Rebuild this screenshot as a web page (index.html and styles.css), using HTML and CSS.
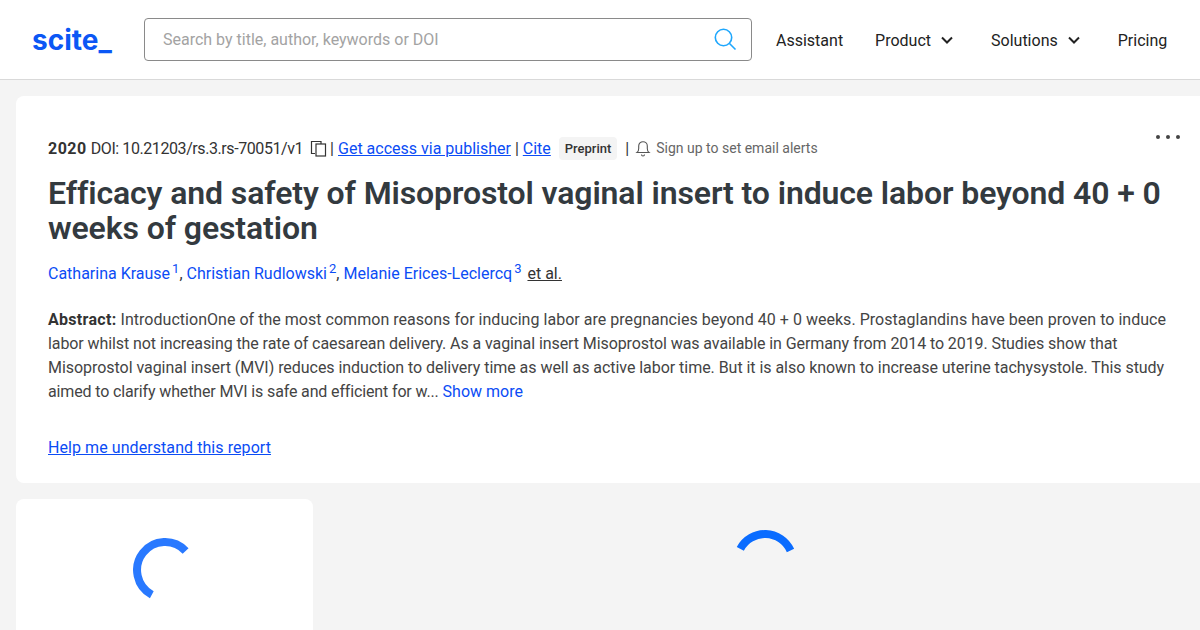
FILE: index.html
```html
<!DOCTYPE html>
<html lang="en">
<head>
<meta charset="utf-8">
<title>Efficacy and safety of Misoprostol vaginal insert</title>
<link rel="stylesheet" href="styles.css">
</head>
<body>
<header class="topbar">
  <a class="logo">scite_</a>
  <div class="search">
    <span class="placeholder">Search by title, author, keywords or DOI</span>
    <svg class="search-icon" width="24" height="24" viewBox="0 0 24 24" fill="none" stroke="#1ea7fd" stroke-width="1.6"><circle cx="10.5" cy="10.5" r="8.2"/><path d="M16.5 16.5L22.5 22.5"/></svg>
  </div>
  <nav class="nav">
    <a class="nav-item assistant">Assistant</a>
    <a class="nav-item product">Product<svg class="chev" width="12" height="8" viewBox="0 0 12 8" fill="none" stroke="#222" stroke-width="2"><path d="M1 1.500L6 6.500L11 1.500"/></svg></a>
    <a class="nav-item solutions">Solutions<svg class="chev" width="12" height="8" viewBox="0 0 12 8" fill="none" stroke="#222" stroke-width="2"><path d="M1 1.500L6 6.500L11 1.500"/></svg></a>
    <a class="nav-item pricing">Pricing</a>
  </nav>
</header>
<main class="page">
  <section class="card">
    <div class="more"><i></i><i></i><i></i></div>
    <div class="meta">
      <b class="year">2020</b><span class="doi">DOI: 10.21203/rs.3.rs-70051/v1</span>
      <svg class="copy" width="17" height="17" viewBox="0 0 17 17" fill="none" stroke="#333" stroke-width="1.2"><path d="M5 13.500H1.500V1.500H11V4"/><rect x="6" y="4" width="9.500" height="12"/></svg>
      <span class="sep sep-copy">|</span><a class="link">Get access via publisher</a><span class="sep">|</span><a class="link">Cite</a>
      <span class="badge">Preprint</span>
      <span class="sep sep-wide">|</span>
      <svg class="bell" width="16" height="18" viewBox="0 0 16 18" fill="none" stroke="#555" stroke-width="1.100"><path d="M2 13.500c1.300-1 1.700-2.200 1.700-4V7a4.300 4.300 0 0 1 8.600 0v2.500c0 1.800.4 3 1.700 4z"/><path d="M6.500 15.500a1.500 1.500 0 0 0 3 0"/></svg>
      <span class="alerts">Sign up to set email alerts</span>
    </div>
    <h1 class="title">Efficacy and safety of Misoprostol vaginal insert to induce labor beyond 40 + 0 weeks of gestation</h1>
    <p class="authors"><a>Catharina Krause</a><sup>1</sup>, <a>Christian Rudlowski</a><sup>2</sup>, <a>Melanie Erices-Leclercq</a><sup>3</sup> <u class="etal">et al.</u></p>
    <p class="abstract"><span class="ln ln1"><b>Abstract:</b> IntroductionOne of the most common reasons for inducing labor are pregnancies beyond 40 + 0 weeks. Prostaglandins have been proven to induce</span> <span class="ln ln2">labor whilst not increasing the rate of caesarean delivery. As a vaginal insert Misoprostol was available in Germany from 2014 to 2019. Studies show that</span> <span class="ln ln3">Misoprostol vaginal insert (MVI) reduces induction to delivery time as well as active labor time. But it is also known to increase uterine tachysystole. This study</span> <span class="ln ln4"><span class="ln4-text">aimed to clarify whether MVI is safe and efficient for w...</span> <a class="show">Show more</a></span></p>
    <a class="link help">Help me understand this report</a>
  </section>
  <div class="lower">
    <aside class="side">
      <svg width="70" height="70" viewBox="0 0 70 70" fill="none" stroke="#2979ff" stroke-width="8"><path d="M52.600 14A28 28 0 1 0 18.800 57.700"/></svg>
    </aside>
    <div class="content">
      <svg width="70" height="70" viewBox="0 0 70 70" fill="none" stroke="#0a6cff" stroke-width="8"><path d="M10.300 21.800A28 28 0 0 1 60.500 23.500"/></svg>
    </div>
  </div>
</main>
</body>
</html>
```
FILE: styles.css
```css
* { box-sizing: border-box; }
html, body { margin: 0; height: 630px; overflow: hidden; }
body { background: #f4f4f4; font-family: Roboto, "Liberation Sans", sans-serif; font-size: 16px; color: #333; }
a { cursor: pointer; }
.topbar { height: 80px; background: #fff; border-bottom: 1px solid #d9d9d9; display: flex; align-items: center; padding: 0 32px; }
.logo { width: 112px; color: #0b57f5; font: 700 28px/1 Inter, sans-serif; }
.search { width: 608px; height: 43px; margin-top: -1px; border: 1px solid #8a8a8a; border-radius: 4px; display: flex; align-items: center; justify-content: space-between; padding: 0 14px 0 18px; }
.placeholder { color: #a3a3a3; font-size: 16px; }
.nav { display: flex; margin-left: 24px; flex: 1; padding-top: 1px; }
.nav-item { color: #222; font-size: 16px; display: flex; align-items: center; }
.product { margin-left: 32px; }
.solutions { margin-left: 38px; }
.pricing { margin-left: 38px; }
.chev { margin-left: 10px; }
.page { padding: 16px 0 0 16px; }
.card { position: relative; background: #fff; border-radius: 8px 0 0 8px; height: 387px; padding: 40px 32px 0; }
.more { position: absolute; top: 39px; right: 20px; display: flex; gap: 6px; }
.more i { width: 4px; height: 4px; border-radius: 50%; background: #444; }
.meta { display: flex; align-items: center; height: 24px; font-size: 16px; white-space: nowrap; }
.year { font-weight: 700; margin-right: 4px; letter-spacing: .5px; }
.doi { letter-spacing: -.42px; }
.copy { margin: 0 1px 0 7px; }
.sep { margin: 0 4px; color: #333; }
.sep-copy { margin: 0 4px 0 2px; }
.link { color: #0b4cf5; text-decoration: underline; }
.badge { margin-left: 8px; background: #f4f4f4; border-radius: 4px; padding: 4px 6px; font-size: 13px; font-weight: 500; color: #333; }
.sep-wide { margin: 0 4px 0 8px; }
.alerts { color: #666; font-size: 14px; margin-left: 5px; }
.bell { margin-left: 2px; }
.title { margin: 16px 0 0; font-size: 32px; line-height: 35px; font-weight: 600; letter-spacing: -.11px; color: #333a3f; }
.authors { margin: 16px 0 0; line-height: 24px; color: #333; }
.authors a { color: #0b4cf5; }
.authors sup { font-size: 13px; line-height: 0; color: #0b4cf5; margin-left: 2px; }
.etal { margin-left: 2px; }
.abstract { margin: 22px 0 0; line-height: 24px; color: #444; }
.abstract b { color: #333; letter-spacing: .3px; }
.ln { display: block; white-space: nowrap; }
.ln1 { letter-spacing: .03px; }
.ln2 { letter-spacing: -.085px; }
.ln3 { letter-spacing: -.043px; }
.ln4-text { letter-spacing: -.14px; }
.show { color: #0b4cf5; }
.help { display: block; margin-top: 32px; line-height: 24px; letter-spacing: .07px; }
.lower { display: flex; margin-top: 16px; }
.side { width: 297px; height: 131px; background: #fff; border-radius: 8px 8px 0 0; padding: 38px 0 0 117px; }
.content { padding: 28px 0 0 417px; }
.side svg, .content svg { display: block; }
```
